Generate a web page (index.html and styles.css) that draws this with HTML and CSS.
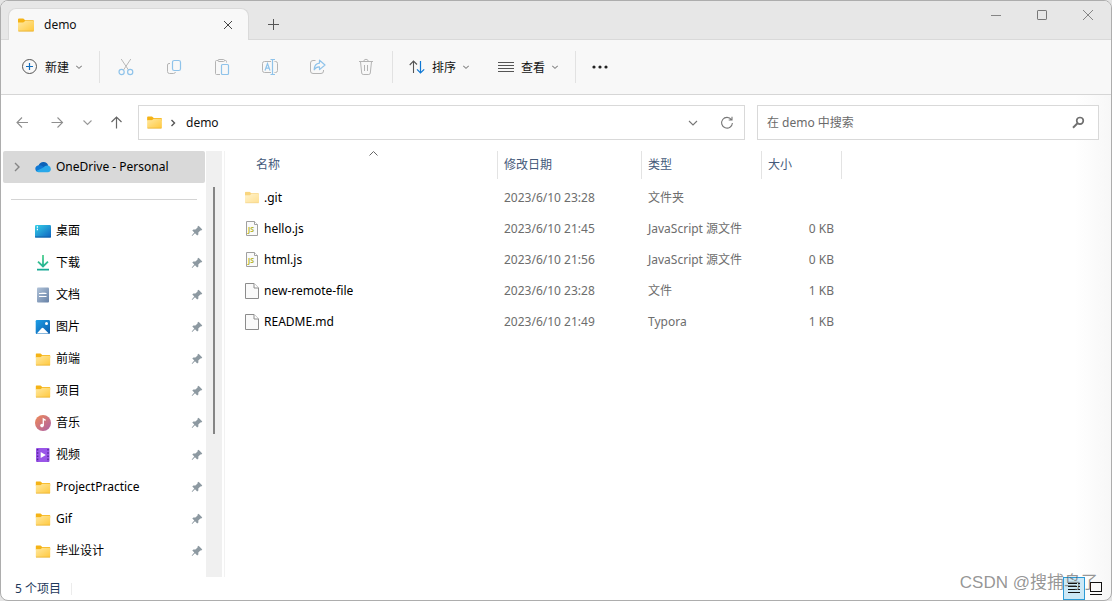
FILE: index.html
```
<!DOCTYPE html>
<html lang="zh-CN">
<head>
<meta charset="utf-8">
<title>demo</title>
<link rel="stylesheet" href="styles.css">
</head>
<body>
<svg class="defs" width="0" height="0" aria-hidden="true">
  <defs>
    <linearGradient id="gold" x1="0" y1="0" x2="1" y2="1"><stop offset="0" stop-color="#ffe9a2"/><stop offset="1" stop-color="#ffc83d"/></linearGradient>
    <linearGradient id="desk" x1="0" y1="0" x2="1" y2="1"><stop offset="0" stop-color="#35d0e8"/><stop offset="1" stop-color="#0f62c0"/></linearGradient>
    <linearGradient id="green" gradientUnits="userSpaceOnUse" x1="0" y1="0" x2="0" y2="16"><stop offset="0" stop-color="#4fd08e"/><stop offset="1" stop-color="#14a795"/></linearGradient>
    <linearGradient id="slate" x1="0" y1="0" x2="1" y2="1"><stop offset="0" stop-color="#b0c2d8"/><stop offset="1" stop-color="#6681a6"/></linearGradient>
    <linearGradient id="azure" x1="0" y1="0" x2="1" y2="1"><stop offset="0" stop-color="#1d9fe8"/><stop offset="1" stop-color="#0b5cab"/></linearGradient>
    <linearGradient id="rose" x1="0" y1="0" x2="1" y2="1"><stop offset="0" stop-color="#f08a55"/><stop offset="1" stop-color="#ab60a8"/></linearGradient>
  </defs>
  <symbol id="folder" viewBox="0 0 16 14"><path d="M0 1.5Q0 .5 1 .5H5.3L7.2 2.2H15Q16 2.2 16 3.2V5H0Z" fill="#f5b316"/><path d="M0 4.6H5.2L7.2 3H15.2Q16 3 16 3.8V12.5Q16 13.3 15.2 13.3H.8Q0 13.3 0 12.5Z" fill="url(#gold)"/><path d="M.4 13.1H15.6" stroke="#e6ae2e" stroke-width=".8"/></symbol>
  <symbol id="chev" viewBox="0 0 8 8"><path d="M1.3 2.8 4 5.3 6.7 2.8" fill="none" stroke="currentColor" stroke-width="1.1"/></symbol>
  <symbol id="pin" viewBox="0 0 12 12"><path d="M7.6.8 11.3 4.4 10.2 5.6 9.4 5.4 7.3 7.6 7.4 9.4 6.2 10.4 4 8.2 1.2 11 .7 10.5 3.3 7.5 1.3 5.4 2.4 4.4 4.4 4.5 6.6 2.5 6.4 1.8Z" fill="#8d99a1"/></symbol>
  <symbol id="page" viewBox="0 0 14 16"><path d="M.5.5H9L13.5 5V15.5H.5Z" fill="#fafafa" stroke="#8c8c8c"/><path d="M9 .5V5H13.5" fill="#fff" stroke="#8c8c8c"/></symbol>
  <symbol id="script" viewBox="0 0 14 16"><path d="M1.5.5H9.5L12.5 3.5V14.5H1.5Z" fill="#fafafa" stroke="#a0a0a0"/><path d="M9.5.5V3.5H12.5" fill="#fff" stroke="#a0a0a0"/></symbol>
</svg>

<div class="window">
  <header class="titlebar">
    <div class="tab">
      <svg class="tab-folder" width="16" height="14"><use href="#folder"/></svg>
      <span class="tab-name">demo</span>
      <button class="tab-close" aria-label="关闭标签页"><svg width="10" height="10" viewBox="0 0 10 10"><path d="M1 1 9 9M9 1 1 9" stroke="#444"/></svg></button>
    </div>
    <button class="tab-add" aria-label="新建标签页"><svg width="11" height="11" viewBox="0 0 11 11"><path d="M5.5 0V11M0 5.5H11" stroke="#555"/></svg></button>
    <div class="caption">
      <button aria-label="最小化"><svg width="12" height="12" viewBox="0 0 12 12"><path d="M1 6.5H11" stroke="#858585"/></svg></button>
      <button aria-label="最大化"><svg width="12" height="12" viewBox="0 0 12 12"><rect x="1.5" y="1.5" width="9" height="9" rx=".6" fill="none" stroke="#777"/></svg></button>
      <button aria-label="关闭"><svg width="12" height="12" viewBox="0 0 12 12"><path d="M1 1 11 11M11 1 1 11" stroke="#858585"/></svg></button>
    </div>
  </header>

  <div class="toolbar">
    <button class="cmd"><svg width="16" height="16" viewBox="0 0 16 16" fill="none"><circle cx="7.5" cy="7.5" r="7" stroke="#555"/><path d="M7.5 4V11M4 7.5H11" stroke="#0f6cbd" stroke-width="1.2"/></svg><span>新建</span><svg class="chev" width="8" height="8"><use href="#chev"/></svg></button>
    <i class="rule rule-new"></i>
    <button class="tool" aria-label="剪切" disabled><svg width="16" height="18" viewBox="0 0 16 18" fill="none"><path d="M3.2 1 10.5 12M12.8 1 5.5 12" stroke="#b9b9b9"/><circle cx="3.6" cy="14" r="2.6" stroke="#8fc3ea" stroke-width="1.2"/><circle cx="12.2" cy="14" r="2.6" stroke="#8fc3ea" stroke-width="1.2"/></svg></button>
    <button class="tool" aria-label="复制" disabled><svg width="16" height="16" viewBox="0 0 16 16" fill="none"><path d="M4 4.5H3Q1.5 4.5 1.5 6V12.5Q1.5 14.5 3.5 14.5H7.5Q9 14.5 9.5 13" stroke="#b4b4b4"/><rect x="6.5" y="1.5" width="8" height="10" rx="1.8" stroke="#8fc3ea" stroke-width="1.2"/></svg></button>
    <button class="tool" aria-label="粘贴" disabled><svg width="16" height="18" viewBox="0 0 16 18" fill="none"><path d="M6 16.5H2.5Q1.5 16.5 1.5 15.5V3.5Q1.5 2.5 2.5 2.5H4M10.5 2.5H11.5Q12.5 2.5 12.5 3.5V4.5" stroke="#b4b4b4"/><rect x="4" y="1.5" width="6.5" height="2" rx="1" stroke="#b4b4b4"/><rect x="7.5" y="6.5" width="7" height="10" rx="1" stroke="#8fc3ea" stroke-width="1.2"/></svg></button>
    <button class="tool" aria-label="重命名" disabled><svg width="18" height="18" viewBox="0 0 18 18" fill="none"><path d="M10 3.5H3.5Q1.5 3.5 1.5 5.5V12.5Q1.5 14.5 3.5 14.5H10M13.5 3.5H14.5Q16.5 3.5 16.5 5.5V12.5Q16.5 14.5 14.5 14.5H13.5" stroke="#b4b4b4"/><path d="M9.5 1.5H14M11.5 1.5V16.5M9.5 16.5H14M4 12.5 6.5 5.5 9 12.5M5 10.2H8.2" stroke="#8fc3ea" stroke-width="1.2"/></svg></button>
    <button class="tool" aria-label="共享" disabled><svg width="18" height="18" viewBox="0 0 18 18" fill="none"><path d="M6.5 2.5H4Q1.5 2.5 1.5 5V13Q1.5 15.5 4 15.5H12Q14.5 15.5 14.5 13V12" stroke="#b4b4b4"/><path d="M10.5 2.2 16 7 10.5 11.6V8.9Q7 8.7 5.2 11.8 5.3 5.6 10.5 5.1Z" stroke="#8fc3ea" stroke-width="1.2" stroke-linejoin="round"/></svg></button>
    <button class="tool" aria-label="删除" disabled><svg width="16" height="18" viewBox="0 0 16 18" fill="none"><path d="M1 3.5H15M5.7 3.3Q6 1.3 8 1.3T10.3 3.3M2.5 3.7 3.7 15Q3.9 16.5 5.2 16.5H10.8Q12.1 16.5 12.3 15L13.5 3.7M6.5 7V13M9.5 7V13" stroke="#b4b4b4"/></svg></button>
    <i class="rule rule-tools"></i>
    <button class="cmd"><svg width="16" height="16" viewBox="0 0 16 16" fill="none"><path d="M4.5 14V2.2M.7 6 4.5 2 8 5.5" stroke="#555" stroke-width="1.1"/><path d="M11.5 2V13.8M8 10.3 11.5 14 15.2 10.3" stroke="#0f78d4" stroke-width="1.2"/></svg><span>排序</span><svg class="chev" width="8" height="8"><use href="#chev"/></svg></button>
    <button class="cmd cmd-view"><svg width="16" height="16" viewBox="0 0 16 16"><path d="M0 3.5H16M0 6.5H16M0 9.5H16M0 12.5H16" stroke="#555"/></svg><span>查看</span><svg class="chev" width="8" height="8"><use href="#chev"/></svg></button>
    <i class="rule rule-view"></i>
    <button class="tool" aria-label="查看更多"><svg width="16" height="4" viewBox="0 0 16 4" fill="#222"><circle cx="2" cy="2" r="1.6"/><circle cx="8" cy="2" r="1.6"/><circle cx="14" cy="2" r="1.6"/></svg></button>
  </div>

  <nav class="navbar">
    <button class="hist" aria-label="返回"><svg width="13" height="12" viewBox="0 0 13 12" fill="none"><path d="M12 5.5H1M6 .5 1 5.5 6 10.5" stroke="#8f8f8f" stroke-width="1.1"/></svg></button>
    <button class="hist" aria-label="前进"><svg width="13" height="12" viewBox="0 0 13 12" fill="none"><path d="M.5 5.5H11.5M6.5 .5 11.5 5.5 6.5 10.5" stroke="#8f8f8f" stroke-width="1.1"/></svg></button>
    <button class="recent" aria-label="最近浏览的位置"><svg width="10" height="8" viewBox="0 0 10 8" fill="none"><path d="M.5 1.5 4.5 5.5 8.5 1.5" stroke="#999" stroke-width="1.1"/></svg></button>
    <button class="up" aria-label="上一级"><svg width="12" height="13" viewBox="0 0 12 13" fill="none"><path d="M6.5 12.5V1.2M1.5 6 6.5 1 11.5 6" stroke="#666" stroke-width="1.2"/></svg></button>
    <div class="address">
      <svg width="15" height="13" viewBox="0 0 16 14"><use href="#folder"/></svg>
      <svg class="crumb" width="6" height="8" viewBox="0 0 6 8" fill="none"><path d="M1.5 1 4.5 4 1.5 7" stroke="#555" stroke-width="1.4"/></svg>
      <a class="place" href="#">demo</a>
      <button class="addr-btn" aria-label="以前的位置"><svg width="10" height="8" viewBox="0 0 10 8" fill="none"><path d="M1 2 5 6 9 2" stroke="#777" stroke-width="1.1"/></svg></button>
      <button class="addr-btn" aria-label="刷新"><svg width="14" height="14" viewBox="0 0 14 14" fill="none"><path d="M11.4 3.6A5.4 5.4 0 1 0 12.4 7M12 .8V4H8.7" stroke="#777" stroke-width="1.1"/></svg></button>
    </div>
    <label class="search">
      <input type="text" placeholder="在 demo 中搜索" aria-label="在 demo 中搜索">
      <svg width="13" height="13" viewBox="0 0 13 13" fill="none"><circle cx="8" cy="4.8" r="3.3" stroke="#707070" stroke-width="1.7"/><path d="M5.5 7.3 1 11.8" stroke="#707070" stroke-width="2"/></svg>
    </label>
  </nav>

  <main class="body">
    <aside class="sidebar">
      <div class="tree">
        <a class="item drive" href="#"><svg class="expand" width="6" height="10" viewBox="0 0 6 10" fill="none"><path d="M1 1 5 5 1 9" stroke="#858585" stroke-width="1.4"/></svg><svg width="16" height="12" viewBox="0 0 16 12"><path d="M3.5 4.5Q5 .8 8.6 1 12.2 1.2 13.2 4.6L9 8Z" fill="#0b62b8"/><path d="M.3 8Q.3 4.6 3.6 4.2 6 3.8 8 5.6L11.5 8 3 11Q.4 10.6.3 8Z" fill="#0f78d4"/><path d="M8 6.8Q10.5 4 13.2 4.6 15.8 5.3 15.9 8 15.8 11 12.8 11.2H3.3Q2 11 1.2 10Z" fill="#28a8ea"/></svg><span>OneDrive - Personal</span></a>
        <hr class="split">
        <a class="item" href="#"><svg width="16" height="16" viewBox="0 0 16 16"><rect y="2" width="16" height="12.5" rx="1.2" fill="url(#desk)"/><path d="M1.8 4H3M1.8 6.5H3" stroke="#fff" stroke-width="1.4"/><path d="M0 14H16" stroke="#1261a8"/></svg><span>桌面</span><svg class="pin" width="12" height="12"><use href="#pin"/></svg></a>
        <a class="item" href="#"><svg width="16" height="16" viewBox="0 0 16 16"><path d="M8 0V11M3 6.6 8 11.5 13 6.6M2 14.7H14" fill="none" stroke="url(#green)" stroke-width="1.8"/></svg><span>下载</span><svg class="pin" width="12" height="12"><use href="#pin"/></svg></a>
        <a class="item" href="#"><svg width="16" height="16" viewBox="0 0 16 16"><rect x="2" y=".5" width="12" height="15" rx="1" fill="url(#slate)"/><path d="M4 6.5H11.5M4 9.5H11.5" stroke="#fff" stroke-width="1.1"/><path d="M8.5 5.5V7" stroke="#fff" stroke-width="4" stroke-opacity=".6"/></svg><span>文档</span><svg class="pin" width="12" height="12"><use href="#pin"/></svg></a>
        <a class="item" href="#"><svg width="16" height="16" viewBox="0 0 16 16"><rect x=".7" y="1" width="14.3" height="14" rx="1.2" fill="url(#azure)"/><path d="M1.8 14.6 6.4 9.4Q7.6 8.2 8.8 9.4L13.8 14.6Z" fill="#fff"/><circle cx="11.5" cy="4.5" r="1.5" fill="#fff"/></svg><span>图片</span><svg class="pin" width="12" height="12"><use href="#pin"/></svg></a>
        <a class="item" href="#"><svg width="16" height="13" viewBox="0 0 16 14"><use href="#folder"/></svg><span>前端</span><svg class="pin" width="12" height="12"><use href="#pin"/></svg></a>
        <a class="item" href="#"><svg width="16" height="13" viewBox="0 0 16 14"><use href="#folder"/></svg><span>项目</span><svg class="pin" width="12" height="12"><use href="#pin"/></svg></a>
        <a class="item" href="#"><svg width="16" height="16" viewBox="0 0 16 16"><circle cx="8" cy="8" r="8" fill="url(#rose)"/><circle cx="7" cy="10.6" r="1.8" fill="#fff"/><path d="M8.3 10.6V4L10.6 5.4" fill="none" stroke="#fff" stroke-width="1.3"/></svg><span>音乐</span><svg class="pin" width="12" height="12"><use href="#pin"/></svg></a>
        <a class="item" href="#"><svg width="16" height="16" viewBox="0 0 16 16"><rect x="1" y="1" width="13.5" height="14" rx="1" fill="#9a55e8"/><path d="M2.6 2V15M13 2V15" stroke="#55259c" stroke-width="1.5" stroke-dasharray="1.6 1.6"/><path d="M5.7 5 10.8 8 5.7 11Z" fill="#fff"/></svg><span>视频</span><svg class="pin" width="12" height="12"><use href="#pin"/></svg></a>
        <a class="item" href="#"><svg width="16" height="13" viewBox="0 0 16 14"><use href="#folder"/></svg><span>ProjectPractice</span><svg class="pin" width="12" height="12"><use href="#pin"/></svg></a>
        <a class="item" href="#"><svg width="16" height="13" viewBox="0 0 16 14"><use href="#folder"/></svg><span>Gif</span><svg class="pin" width="12" height="12"><use href="#pin"/></svg></a>
        <a class="item" href="#"><svg width="16" height="13" viewBox="0 0 16 14"><use href="#folder"/></svg><span>毕业设计</span><svg class="pin" width="12" height="12"><use href="#pin"/></svg></a>
      </div>
      <div class="scroll"><div class="thumb"></div></div>
    </aside>

    <section class="files">
      <table>
        <colgroup><col class="c-name"><col class="c-date"><col class="c-type"><col class="c-size"></colgroup>
        <thead>
          <tr><th class="h-name">名称<svg class="sorted" width="10" height="6" viewBox="0 0 10 6" fill="none"><path d="M.5 4.5 4.5 .5 8.5 4.5" stroke="#666"/></svg></th><th>修改日期</th><th>类型</th><th>大小</th></tr>
        </thead>
        <tbody>
          <tr><td><div class="file"><svg class="dim" width="14" height="13" viewBox="0 0 16 14"><use href="#folder"/></svg>.git</div></td><td>2023/6/10 23:28</td><td>文件夹</td><td class="size"></td></tr>
          <tr><td><div class="file"><svg width="14" height="16" viewBox="0 0 14 16"><use href="#script"/><text x="3" y="11" class="js-tag">JS</text></svg>hello.js</div></td><td>2023/6/10 21:45</td><td>JavaScript 源文件</td><td class="size">0 KB</td></tr>
          <tr><td><div class="file"><svg width="14" height="16" viewBox="0 0 14 16"><use href="#script"/><text x="3" y="11" class="js-tag">JS</text></svg>html.js</div></td><td>2023/6/10 21:56</td><td>JavaScript 源文件</td><td class="size">0 KB</td></tr>
          <tr><td><div class="file"><svg width="14" height="16"><use href="#page"/></svg>new-remote-file</div></td><td>2023/6/10 23:28</td><td>文件</td><td class="size">1 KB</td></tr>
          <tr><td><div class="file"><svg width="14" height="16"><use href="#page"/></svg>README.md</div></td><td>2023/6/10 21:49</td><td>Typora</td><td class="size">1 KB</td></tr>
        </tbody>
      </table>
    </section>
  </main>

  <footer class="status">
    <span class="count">5 个项目</span>
    <div class="views">
      <button class="view on" aria-label="详细信息"><svg width="14" height="13" viewBox="0 0 14 13"><path d="M1 1.5H10M11 1.5H13M1 4.5H10M11 4.5H13M1 7.5H10M11 7.5H13M1 10.5H13" stroke="#111"/></svg></button>
      <button class="view" aria-label="大图标"><svg width="12" height="13" viewBox="0 0 12 13" fill="none"><rect x=".5" y=".5" width="11" height="9" stroke="#111"/><path d="M0 12.5H12" stroke="#111"/></svg></button>
    </div>
    <span class="watermark">CSDN @搜捕鸟了</span>
  </footer>
</div>
</body>
</html>
```

FILE: styles.css
```
* { box-sizing: border-box; }
body {
  margin: 0;
  background: #e4e4e4;
  color: #111;
  font: 12px/16px "Noto Sans", "Noto Sans CJK SC", sans-serif;
}
button {
  display: flex;
  align-items: center;
  justify-content: center;
  padding: 0;
  border: 0;
  background: none;
  color: inherit;
  font: inherit;
}
a { color: inherit; text-decoration: none; }
svg { flex: none; }
.defs { position: absolute; }
.js-tag { font: bold 7px "Noto Sans", sans-serif; fill: #b5b52c; }

.window {
  display: flex;
  flex-direction: column;
  min-height: 100vh;
  overflow: hidden;
  border: 1px solid #adadad;
  border-radius: 8px;
  background: linear-gradient(to left, #f7f7f7, #fff 36px);
}

.titlebar {
  display: flex;
  height: 39px;
  padding-left: 7px;
  border-bottom: 1px solid #d9d9d9;
  background: #e7e7e7;
}
.tab {
  display: flex;
  align-items: center;
  width: 241px;
  height: 32px;
  margin-top: 7px;
  padding: 0 13px 0 9px;
  border: 1px solid #dadada;
  border-bottom: 0;
  border-radius: 8px 8px 0 0;
  background: #f8f8f8;
}
.tab-name { flex: 1; margin-left: 10px; }
.tab-close { width: 14px; height: 20px; }
.tab-add { width: 49px; margin-top: 8px; }
.caption { display: flex; height: 28px; margin-left: auto; }
.caption button { width: 46px; }

.toolbar {
  display: flex;
  align-items: center;
  height: 55px;
  padding-left: 11px;
  border-bottom: 1px solid #d6d6d6;
  background: #f8f8f8;
}
.cmd { height: 32px; padding: 0 10px; }
.cmd span { margin: 1px 6px 0 7px; }
.cmd-view { margin-left: 8px; }
.chev { color: #888; }
.tool { width: 48px; height: 32px; }
.rule { width: 1px; height: 32px; background: #e2e2e2; }
.rule-new { margin: 0 2px 0 6px; }
.rule-tools { margin: 0 6px 0 2px; }
.rule-view { margin-left: 6px; }

.navbar { display: flex; padding: 10px 12px 11px 4px; }
.hist { width: 35px; }
.recent { width: 25px; }
.up { width: 32px; margin-right: 6px; }
.address, .search {
  display: flex;
  align-items: center;
  height: 35px;
  border: 1px solid #d9d9d9;
  background: #fff;
}
.address { flex: 1; margin-right: 12px; padding-left: 8px; }
.search { flex: 0 1 342px; padding: 0 13px 0 9px; color: #666; }
.crumb { margin: 0 10px 0 8px; }
.place { flex: 1; }
.addr-btn { width: 34px; height: 33px; }
.search input {
  flex: 1;
  min-width: 0;
  padding: 0;
  border: 0;
  outline: 0;
  background: none;
  font: inherit;
}
.search input::placeholder { color: #6a6a6a; opacity: 1; }

.body { display: flex; flex: 1; }
.sidebar { display: flex; flex: none; width: 224px; border-right: 1px solid #f2f2f2; }
.tree { width: 202px; margin-left: 2px; }
.item {
  display: flex;
  align-items: center;
  height: 32px;
  padding: 0 2px 0 32px;
}
.item span { flex: 1; margin-left: 5px; color: #000; }
.drive { padding-left: 11px; border-radius: 2px; background: #d9d9d9; }
.expand { margin-right: 15px; }
.split { margin: 16px 8px 15px; border: 0; border-top: 1px solid #d4d4d4; }
.scroll { width: 16px; margin-left: 1px; padding-top: 36px; background: #f0f0f0; }
.thumb { width: 2px; height: 247px; margin-left: 7px; background: #858585; }

.files { flex: 1; padding-left: 16px; }
table { width: 601px; table-layout: fixed; border-collapse: separate; border-spacing: 0; }
.c-name { width: 257px; }
.c-date { width: 144px; }
.c-type { width: 120px; }
.c-size { width: 80px; }
th {
  position: relative;
  height: 28px;
  padding: 0 6px;
  border-right: 1px solid #e3e3e3;
  color: #44597a;
  font-weight: 400;
  text-align: left;
}
.h-name { padding-left: 15px; }
.sorted { position: absolute; top: 0; left: 50%; }
td { height: 31px; padding: 0 6px; color: #6d6d6d; white-space: nowrap; }
td:first-child { padding-left: 4px; }
tbody::before { content: ""; display: block; height: 3px; }
.file { display: flex; align-items: center; gap: 5px; color: #000; }
.dim { opacity: 0.55; }
.size { padding-right: 8px; text-align: right; }

.status {
  position: relative;
  display: flex;
  align-items: center;
  height: 23px;
  padding: 0 4px 0 14px;
  color: #1e395b;
}
.count { padding-right: 10px; border-right: 1px solid #ececec; line-height: 12px; }
.views { display: flex; height: 23px; margin-left: auto; }
.view { width: 22px; }
.on { border: 1px solid #2c9bd6; background: #cce8f6; }
.watermark {
  position: absolute;
  right: 13px;
  bottom: 5px;
  color: rgba(90, 90, 90, 0.65);
  font: 17px/24px "Liberation Sans", "Noto Sans CJK SC", sans-serif;
  white-space: nowrap;
}
```
